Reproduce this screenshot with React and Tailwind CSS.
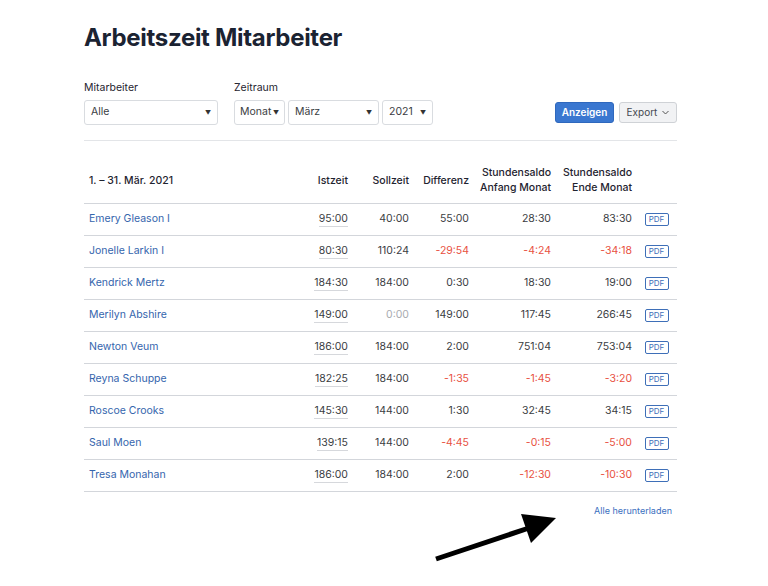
import React from 'react'

const rows = [
  { name: 'Emery Gleason I', ist: '95:00', soll: '40:00', diff: '55:00', anf: '28:30', ende: '83:30' },
  { name: 'Jonelle Larkin I', ist: '80:30', soll: '110:24', diff: '-29:54', anf: '-4:24', ende: '-34:18' },
  { name: 'Kendrick Mertz', ist: '184:30', soll: '184:00', diff: '0:30', anf: '18:30', ende: '19:00' },
  { name: 'Merilyn Abshire', ist: '149:00', soll: '0:00', diff: '149:00', anf: '117:45', ende: '266:45' },
  { name: 'Newton Veum', ist: '186:00', soll: '184:00', diff: '2:00', anf: '751:04', ende: '753:04' },
  { name: 'Reyna Schuppe', ist: '182:25', soll: '184:00', diff: '-1:35', anf: '-1:45', ende: '-3:20' },
  { name: 'Roscoe Crooks', ist: '145:30', soll: '144:00', diff: '1:30', anf: '32:45', ende: '34:15' },
  { name: 'Saul Moen', ist: '139:15', soll: '144:00', diff: '-4:45', anf: '-0:15', ende: '-5:00' },
  { name: 'Tresa Monahan', ist: '186:00', soll: '184:00', diff: '2:00', anf: '-12:30', ende: '-10:30' },
]

const cols = 'grid grid-cols-[216px_52px_61px_60px_82px_81px_1fr]'

function tone(v) {
  if (v.startsWith('-')) return 'text-[#e8513f]'
  if (v === '0:00') return 'text-[#a8abb0]'
  return 'text-[#3a3d42]'
}

function Select({ value, className }) {
  return (
    <div className={'flex items-center justify-between h-[25px] px-[6px] border border-[#d9dce0] rounded-[3px] bg-white text-[10.5px] text-[#3a3d42] ' + className}>
      <span>{value}</span>
      <span className="text-[6px] text-[#333]">▼</span>
    </div>
  )
}

function Num({ v }) {
  return <div className={'text-right pr-1 ' + tone(v)}>{v}</div>
}

export default function App() {
  return (
    <div className="relative w-[768px] h-[586px] bg-white font-['Inter',sans-serif] overflow-hidden">
      <div className="pl-[84px] w-[677px] pt-[22px]">
        <h1 className="text-[24px] font-bold text-[#1b2332] tracking-[-0.3px] leading-[32px]">Arbeitszeit Mitarbeiter</h1>

        <div className="flex items-end mt-[26px]">
          <div className="w-[150px]">
            <div className="text-[10.5px] text-[#1f2430] mb-[4px]">Mitarbeiter</div>
            <Select value="Alle" className="w-[134px]" />
          </div>
          <div>
            <div className="text-[10.5px] text-[#1f2430] mb-[4px]">Zeitraum</div>
            <div className="flex gap-[3px]">
              <Select value="Monat" className="w-[51px] !px-[5px]" />
              <Select value="März" className="w-[91px]" />
              <Select value="2021" className="w-[51px]" />
            </div>
          </div>
          <div className="ml-auto flex gap-[5px] mb-[2px]">
            <button className="h-[21px] w-[59px] rounded-[3px] bg-[#3a77d0] border border-[#2f68bd] text-white text-[10px] font-semibold">Anzeigen</button>
            <button className="h-[21px] w-[58px] rounded-[3px] bg-[#f1f2f4] border border-[#cfd2d6] text-[#444950] text-[10px] flex items-center justify-center gap-[5px]">
              Export
              <svg width="7" height="5" viewBox="0 0 7 5" fill="none"><path d="M0.5 1l3 3 3-3" stroke="#555" strokeWidth="1" /></svg>
            </button>
          </div>
        </div>

        <div className="mt-[15px] border-t border-[#e3e5e8]" />

        <div className="mt-[17px]">
          <div className={cols + ' h-[46px] items-center text-[10.5px] font-medium text-[#1f2430] leading-[15px] border-b border-[#d3d6db]'}>
            <div className="pl-[5px]">1. – 31. Mär. 2021</div>
            <div className="text-right pr-1">Istzeit</div>
            <div className="text-right pr-1">Sollzeit</div>
            <div className="text-right pr-1">Differenz</div>
            <div className="text-right pr-1">Stundensaldo<br />Anfang Monat</div>
            <div className="text-right pr-1">Stundensaldo<br />Ende Monat</div>
            <div />
          </div>
          {rows.map((r) => (
            <div key={r.name} className={cols + ' h-[32px] items-center text-[10.5px] border-b border-[#d3d6db]'}>
              <div className="pl-[5px] text-[#3565ad]">{r.name}</div>
              <div className="text-right pr-1">
                <span className="text-[#3a3d42] border-b border-[#d6d8dc] pb-[1px]">{r.ist}</span>
              </div>
              <Num v={r.soll} />
              <Num v={r.diff} />
              <Num v={r.anf} />
              <Num v={r.ende} />
              <div className="flex justify-center">
                <span className="w-[24px] h-[13px] border border-[#3e6fb8] rounded-[2px] text-[8px] text-[#3e6fb8] flex items-center justify-center leading-none">PDF</span>
              </div>
            </div>
          ))}
          <div className="text-right pr-[5px] mt-[12px] text-[9px] text-[#3a6fc0]">Alle herunterladen</div>
        </div>
      </div>

      <svg className="absolute left-0 top-0" width="768" height="586" viewBox="0 0 768 586">
        <line x1="436" y1="559" x2="532" y2="527" stroke="#000" strokeWidth="5" />
        <polygon points="556,518 521,514 531,543" fill="#000" />
      </svg>
    </div>
  )
}
